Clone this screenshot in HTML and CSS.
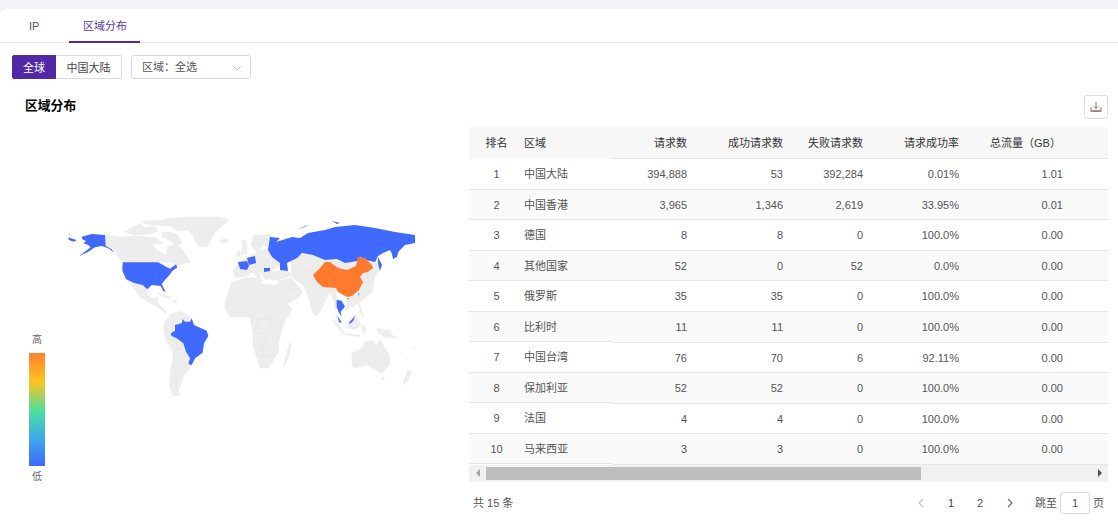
FILE: index.html
```html
<!DOCTYPE html>
<html lang="zh">
<head>
<meta charset="utf-8">
<title>区域分布</title>
<link rel="stylesheet" href="styles.css">
</head>
<body>
<main class="card">
  <nav class="tabs">
    <div class="tab">IP</div>
    <div class="tab active">区域分布</div>
  </nav>
  <div class="content">
    <div class="toolbar">
      <div class="seg">
        <span class="seg-item on">全球</span>
        <span class="seg-item">中国大陆</span>
      </div>
      <div class="select">
        <span>区域：全选</span>
        <svg class="chev" width="10" height="6" viewBox="0 0 10 6"><path d="M1 1l4 4 4-4" fill="none" stroke="#c8c8c8" stroke-width="1"/></svg>
      </div>
    </div>
    <div class="head">
      <h2 class="title">区域分布</h2>
      <button class="dl" type="button" aria-label="下载">
        <svg width="12" height="12" viewBox="0 0 12 12"><path d="M6 1v6.5M3.8 5.3L6 7.5l2.2-2.2" fill="none" stroke="#8a7468" stroke-width="1"/><path d="M1 6v4.5h10V6" fill="none" stroke="#8a7468" stroke-width="1"/><path d="M1 9h10v1.5H1z" fill="#a8968c"/></svg>
      </button>
    </div>
    <div class="body">
      <div class="mapbox">
        <svg class="map" width="457" height="354" viewBox="12 127 457 354">
          <g>
            <path class="land" d="M105 235L120 237L140 236L155 238L163 243L152 244L157 250L164 254L165 258L168 246L178 245L184 252L190 262L178 265L172 262L160 262L122 262L113 248L110 248L105 245Z"/>
            <path class="land" d="M125 232L133 227L140 224L146 228L155 226L158 231L150 234L135 235ZM142 221L165 220L170 226L155 225L146 224ZM162 232L170 232L178 235L182 243L175 245L170 240L162 237ZM165 219L190 217L185 222L172 226Z"/>
            <path class="land" d="M165 222L187 217L220 217L229 220L215 232L207 247L198 246L193 235L188 230L178 231Z"/>
            <path class="land" d="M219 240L228 239L227 243L221 243Z"/>
            <path class="land" d="M126 279L132 283L142 284L147 289L147 295L152 299L158 297L157 303L165 310L167 314L163 311L157 306L150 303L140 297L135 290L130 283Z"/>
            <path class="land" d="M157 293L168 296L172 299L162 296ZM173 300L178 301L177 302L173 302Z"/>
          </g>
          <g transform="translate(50 210) scale(.33333)">
            <path class="land" d="M345 335L365 310L395 303L425 325L432 345L470 362L475 378L460 410L455 430L435 445L420 475L400 500L395 520L385 540L390 555L370 558L358 530L360 490L370 430L345 385L340 350Z"/>
            <path class="line" d="M345 335L375 345M362 370L345 350M400 400L370 430M408 425L385 480L378 540M420 445L398 480"/>
            <path class="blue" d="M95 80L125 72L165 75L167 108L185 118L193 128L175 115L155 108L135 112L115 125L88 138L108 122L122 112L115 105L100 100L108 93L97 88Z"/>
            <path class="blue" d="M55 82L62 85L80 90L72 95L56 90ZM57 70L60 72L58 74Z"/>
            <path class="blue" d="M218 157L325 157L348 170L360 176L378 163L382 172L368 182L358 195L345 210L335 222L347 245L340 243L332 228L305 225L292 238L278 225L250 218L228 207L217 182Z"/>
            <path class="blue" d="M375 345L395 340L398 328L405 335L420 335L425 325L432 345L470 362L475 378L462 400L458 428L435 445L425 465L415 462L420 445L408 425L400 400L380 385L365 378L362 370L375 362Z"/>
          </g>
          <g>
            <path class="land" d="M231 283L245 278L258 278L262 284L275 285L279 284L283 296L288 305L292 309L283 325L279 340L278 353L268 368L260 368L253 345L253 333L250 317L230 317L225 308L226 300Z"/>
            <path class="land" d="M283 368L290 342L291 346L288 358Z"/>
            <path class="land" d="M233 270L240 262L250 256L270 246L285 250L287 266L280 265L272 270L272 277L266 280L259 270L262 282L252 272L247 276L235 278Z"/>
            <path class="land" d="M251 246L254 235L264 235L270 234L272 248L263 245L260 250L257 252ZM242 240L246 241L247 253L240 255L243 248ZM237 252L240 251L240 256L237 256Z"/>
            <path class="land" d="M270 272L285 270L293 275L278 280L270 279Z"/>
            <path class="land" d="M291 262L297 255L313 254L330 258L378 258L372 292L352 308L349 293L335 290L338 305L336 310L333 298L330 292L318 315L314 316L308 296L303 285L297 281L292 277Z"/>
            <path class="land" d="M278 281L292 278L302 292L298 298L285 305L281 298Z"/>
            <path class="land" d="M349 292L354 296L350 307L347 303ZM365 274L370 276L368 287L364 284Z"/>
            <path class="land" d="M367 277L375 270L379 262L381 266L374 279L366 284Z"/>
            <path class="line thin" d="M262 268L270 258M247 262L258 265M272 260L285 260M296 268L312 272M293 276L305 285M282 290L301 289M318 272L330 292"/>
          </g>
          <g transform="translate(225 300) scale(.33333)">
            <path class="line" d="M15 50L50 20L75 50L100 60L85 100M100 60L135 55L165 80M135 55L135 80L165 115M85 100L130 100L115 140M85 135L115 140L110 170L160 160M135 55L100 0M55 0L50 20M15 0L50 20"/>
          </g>
          <g>
            <path class="blue" d="M270 237L280 238L276 242L292 237L300 238L308 233L325 230L335 227L355 225L375 228L395 232L415 235L415 243L405 245L398 252L394 258L390 250L383 253L378 256L375 262L366 260L360 257L357 261L345 263L337 259L325 260L313 255L302 253L297 258L287 263L288 271L280 270L280 263L272 257L268 250Z"/>
            <path class="blue" d="M293 232L305 226L309 225L297 230ZM332 221L340 223L337 224ZM378 257L382 265L380 271L378 264ZM392 254L399 250L397 257L393 259Z"/>
            <path class="blue" d="M238 262L247 261L249 266L247 270L240 269ZM247 258L255 256L256 263L249 265ZM264 268L270 268L270 271L264 272Z"/>
          </g>
          <g transform="translate(320 290) scale(.33333)">
            <path class="land" d="M75 20L88 40L87 60L75 58L82 40ZM45 65L65 97L58 98L48 80ZM40 85L75 130L68 132L42 100ZM75 130L120 135L120 140L75 136ZM85 100L105 75L125 105L105 120L85 115ZM125 110L135 105L138 128L128 125ZM115 35L125 55L132 82L120 70ZM170 115L200 120L232 146L190 140L175 130Z"/>
            <path class="land" d="M95 190L125 175L135 155L160 150L170 165L180 150L208 195L210 225L185 250L165 240L140 225L100 235L95 220Z"/>
            <path class="land" d="M185 262L195 262L190 272ZM262 240L275 245L265 270L250 285L250 275ZM240 185L246 190L243 192ZM280 170L286 168L282 178ZM205 120L212 116L210 125Z"/>
            <path class="blue" d="M50 30L65 32L75 50L62 65L65 80L55 65L50 50ZM52 78L65 97L58 98ZM85 100L105 78L100 92L92 100ZM115 8L118 10L116 20Z"/>
          </g>
          <path class="orange" d="M313 275L320 268L325 262L330 262L338 268L347 270L356 266L358 257L365 258L372 265L373 268L368 272L363 273L360 277L363 282L359 290L352 296L347 297L338 292L336 288L323 287L317 282ZM347 298L349 298L348 300Z"/>
        </svg>
        <div class="legend">
          <span>高</span>
          <div class="ramp"></div>
          <span>低</span>
        </div>
      </div>
      <div class="tablewrap">
        <div class="tbl">
          <div class="fixed">
            <div class="row hd"><span class="c-rank">排名</span><span>区域</span></div>
            <div class="row"><span class="c-rank">1</span><span>中国大陆</span></div>
            <div class="row alt"><span class="c-rank">2</span><span>中国香港</span></div>
            <div class="row"><span class="c-rank">3</span><span>德国</span></div>
            <div class="row alt"><span class="c-rank">4</span><span>其他国家</span></div>
            <div class="row"><span class="c-rank">5</span><span>俄罗斯</span></div>
            <div class="row alt"><span class="c-rank">6</span><span>比利时</span></div>
            <div class="row"><span class="c-rank">7</span><span>中国台湾</span></div>
            <div class="row alt"><span class="c-rank">8</span><span>保加利亚</span></div>
            <div class="row"><span class="c-rank">9</span><span>法国</span></div>
            <div class="row alt"><span class="c-rank">10</span><span>马来西亚</span></div>
          </div>
          <div class="scroll">
            <div class="row hd"><span>请求数</span><span>成功请求数</span><span>失败请求数</span><span>请求成功率</span><span class="c-gb-h">总流量（GB）</span></div>
            <div class="row"><span>394,888</span><span>53</span><span>392,284</span><span>0.01%</span><span class="c-gb">1.01</span></div>
            <div class="row alt"><span>3,965</span><span>1,346</span><span>2,619</span><span>33.95%</span><span class="c-gb">0.01</span></div>
            <div class="row"><span>8</span><span>8</span><span>0</span><span>100.0%</span><span class="c-gb">0.00</span></div>
            <div class="row alt"><span>52</span><span>0</span><span>52</span><span>0.0%</span><span class="c-gb">0.00</span></div>
            <div class="row"><span>35</span><span>35</span><span>0</span><span>100.0%</span><span class="c-gb">0.00</span></div>
            <div class="row alt"><span>11</span><span>11</span><span>0</span><span>100.0%</span><span class="c-gb">0.00</span></div>
            <div class="row"><span>76</span><span>70</span><span>6</span><span>92.11%</span><span class="c-gb">0.00</span></div>
            <div class="row alt"><span>52</span><span>52</span><span>0</span><span>100.0%</span><span class="c-gb">0.00</span></div>
            <div class="row"><span>4</span><span>4</span><span>0</span><span>100.0%</span><span class="c-gb">0.00</span></div>
            <div class="row alt"><span>3</span><span>3</span><span>0</span><span>100.0%</span><span class="c-gb">0.00</span></div>
          </div>
        </div>
        <div class="hbar">
          <span class="arrow left"></span>
          <div class="track"><div class="thumb"></div></div>
          <span class="arrow right"></span>
        </div>
        <div class="pager">
          <span class="total">共 15 条</span>
          <div class="pages">
            <svg class="pg-arrow" width="6" height="10" viewBox="0 0 6 10"><path d="M5 1L1 5l4 4" fill="none" stroke="#c4c4c4" stroke-width="1.1"/></svg>
            <span class="pg cur">1</span>
            <span class="pg">2</span>
            <svg class="pg-arrow" width="6" height="10" viewBox="0 0 6 10"><path d="M1 1l4 4-4 4" fill="none" stroke="#666" stroke-width="1.1"/></svg>
            <span class="jump">跳至</span>
            <span class="input">1</span>
            <span>页</span>
          </div>
        </div>
      </div>
    </div>
  </div>
</main>
</body>
</html>
```
FILE: styles.css
```css
* { box-sizing: border-box; }
html, body { margin: 0; height: 521px; overflow: hidden; }
body {
  background: #f2f2f7;
  font: 11px/1.5 "Liberation Sans", "Noto Sans CJK SC", sans-serif;
  color: #444;
  padding-top: 9px;
}
.card { background: #fff; border-radius: 8px 0 0 0; height: 512px; }

.tabs { display: flex; height: 34px; padding-left: 15px; border-bottom: 1px solid #e2e2e2; }
.tab { padding: 0 14px; line-height: 34px; color: #555; }
.tab + .tab { margin-left: 15.6px; }
.tab.active { width: 71px; color: #5a36a8; border-bottom: 2px solid #5228a6; height: 34px; white-space: nowrap; }

.content { padding: 12px 10px 0 12px; }
.toolbar { display: flex; gap: 9px; height: 24px; }
.seg { display: flex; }
.seg-item { width: 66px; line-height: 22px; padding-top: 1px; text-align: center; border: 1px solid #dcdcdc; border-left: 0; border-radius: 0 2px 2px 0; color: #444; }
.seg-item.on { width: 44px; background: #5128a5; color: #fff; border: 1px solid #5128a5; border-radius: 2px 0 0 2px; }
.select { width: 120px; display: flex; align-items: center; justify-content: space-between; padding: 1px 8px 0 10px; border: 1px solid #d9d9d9; border-radius: 3px; color: #555; }

.head { display: flex; align-items: center; justify-content: space-between; margin-top: 16px; height: 24px; padding-left: 13px; }
.title { margin: 0 0 2px; font-size: 12.8px; font-weight: 700; color: #000; }
.dl { width: 24px; height: 24px; padding: 0; display: flex; align-items: center; justify-content: center; background: #fff; border: 1px solid #dedede; border-radius: 3px; }

.body { display: flex; margin-top: 8px; }
.mapbox { position: relative; width: 457px; height: 354px; flex: none; }
.map { display: block; filter: blur(.35px); }
.land { fill: #ededed; stroke: #e8e8e8; stroke-width: .5; }
.line { fill: none; stroke: #e0e0e0; stroke-width: 1.5; }
.line.thin { stroke-width: .5; }
.blue { fill: #3f69ff; }
.orange { fill: #ff7a2e; }

.legend { position: absolute; left: 17px; top: 206px; width: 16px; display: flex; flex-direction: column; align-items: center; font-size: 10px; line-height: 14px; color: #666; }
.ramp { width: 16px; height: 113px; flex: none; margin: 6px 0 4px; background: linear-gradient(#ff7f30 0%, #ffc41e 25%, #4ade9f 52%, #3fa8ea 76%, #3e69ff 100%); }

.tablewrap { width: 639px; flex: none; }
.tbl { display: flex; }
.fixed { width: 144px; flex: none; }
.scroll { flex: 1; }
.row { display: grid; height: 30.6px; padding-top: 1px; align-items: center; border-bottom: 1px solid #e6e6e6; color: #555; }
.row.alt { background: #fafafa; }
.row.hd { height: 32px; background: #f7f7f7; color: #333; }
.fixed .row { grid-template-columns: 55px 89px; height: 30.5px; }
.fixed .row.hd { border-bottom-color: #f7f7f7; height: 32px; }
.c-rank { text-align: center; }
.scroll .row { grid-template-columns: 82px 96px 80px 96px 141px; }
.scroll .row > span { text-align: right; padding-right: 8px; }
.scroll .row > .c-gb { padding-right: 45px; }
.scroll .row > .c-gb-h { text-align: left; padding: 0 0 0 23px; }

.hbar { display: flex; align-items: center; height: 17px; background: #f1f1f1; }
.arrow { width: 17px; flex: none; display: flex; justify-content: center; }
.arrow::before { content: ""; border: 4px solid transparent; }
.arrow.left::before { border-right-color: #a3a3a3; border-left-width: 0; }
.arrow.right::before { border-left-color: #505050; border-right-width: 0; }
.track { flex: 1; height: 13px; }
.thumb { width: 435px; height: 13px; background: #bdbdbd; }

.pager { display: flex; justify-content: space-between; align-items: center; height: 22px; margin-top: 10px; padding: 0 4px; color: #555; }
.total { padding-top: 1px; }
.pages { display: flex; align-items: center; }
.pg { width: 12px; text-align: center; margin-left: 17px; }
.pg.cur { color: #5128a5; margin-left: 21px; }
.pg + .pg-arrow { margin-left: 21px; }
.pg-arrow { flex: none; }
.jump { margin: 0 3px 0 22px; }
.input { width: 30px; height: 22px; line-height: 20px; text-align: center; border: 1px solid #dcdcdc; border-radius: 3px; margin-right: 3px; }
```
